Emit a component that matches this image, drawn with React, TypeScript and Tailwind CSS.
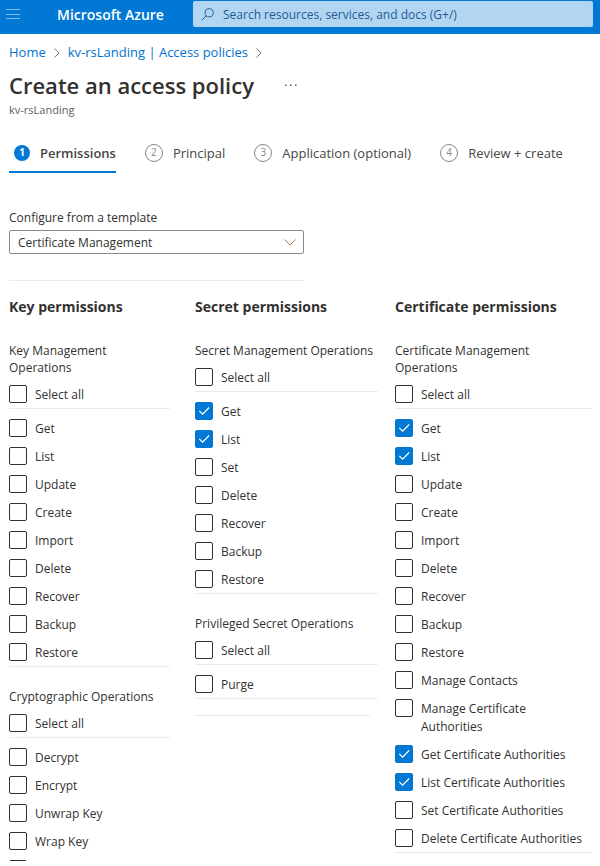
import React, { useState } from "react";

type Group = { title: string; items: string[] };
type Column = { name: string; className: string; groups: Group[]; closing?: boolean };

const columns: Column[] = [
  {
    name: "Key permissions",
    className: "pr-[25px]",
    groups: [
      {
        title: "Key Management Operations",
        items: ["Get", "List", "Update", "Create", "Import", "Delete", "Recover", "Backup", "Restore"],
      },
      {
        title: "Cryptographic Operations",
        items: ["Decrypt", "Encrypt", "Unwrap Key", "Wrap Key", "Verify"],
      },
    ],
  },
  {
    name: "Secret permissions",
    className: "pr-[17px]",
    closing: true,
    groups: [
      {
        title: "Secret Management Operations",
        items: ["Get", "List", "Set", "Delete", "Recover", "Backup", "Restore"],
      },
      { title: "Privileged Secret Operations", items: ["Purge"] },
    ],
  },
  {
    name: "Certificate permissions",
    className: "",
    groups: [
      {
        title: "Certificate Management Operations",
        items: [
          "Get",
          "List",
          "Update",
          "Create",
          "Import",
          "Delete",
          "Recover",
          "Backup",
          "Restore",
          "Manage Contacts",
          "Manage Certificate Authorities",
          "Get Certificate Authorities",
          "List Certificate Authorities",
          "Set Certificate Authorities",
          "Delete Certificate Authorities",
        ],
      },
    ],
  },
];

const certificateTemplate = [
  "Secret Management Operations/Get",
  "Secret Management Operations/List",
  "Certificate Management Operations/Get",
  "Certificate Management Operations/List",
  "Certificate Management Operations/Get Certificate Authorities",
  "Certificate Management Operations/List Certificate Authorities",
];

const steps = ["Permissions", "Principal", "Application (optional)", "Review + create"];

function Chevron() {
  return (
    <svg className="h-[10px] w-[6px] shrink-0" viewBox="0 0 6 10" fill="none" stroke="#797775" aria-hidden="true">
      <path d="M0.5 0.5 5 5 0.5 9.5" />
    </svg>
  );
}

function CheckRow({ label, checked, onChange }: { label: string; checked: boolean; onChange: () => void }) {
  return (
    <label className="flex gap-2 pr-[6px] leading-[18px]">
      <span className="grid size-[18px] shrink-0">
        <input
          type="checkbox"
          checked={checked}
          onChange={onChange}
          className="col-start-1 row-start-1 size-[18px] appearance-none rounded-xs border border-[#323130] bg-white checked:border-[#0078d4] checked:bg-[#0078d4]"
        />
        {checked && (
          <svg
            className="pointer-events-none col-start-1 row-start-1 size-[18px]"
            viewBox="0 0 18 18"
            fill="none"
            stroke="white"
            strokeWidth="1.2"
            aria-hidden="true"
          >
            <path d="M4.3 8.8 7.6 12.1 14.2 5.5" />
          </svg>
        )}
      </span>
      <span className="pt-px">{label}</span>
    </label>
  );
}

export default function App() {
  const [selected, setSelected] = useState<string[]>(certificateTemplate);

  const toggle = (key: string) =>
    setSelected((s) => (s.includes(key) ? s.filter((k) => k !== key) : [...s, key]));

  const toggleAll = (group: Group) => {
    const keys = group.items.map((i) => `${group.title}/${i}`);
    setSelected((s) =>
      keys.every((k) => s.includes(k)) ? s.filter((k) => !keys.includes(k)) : [...new Set([...s, ...keys])]
    );
  };

  return (
    <div className="flex h-screen flex-col bg-white pb-[5px] font-['Open_Sans','Noto_Sans',sans-serif] text-[12px] text-[#323130]">
      <header className="flex h-[34px] shrink-0 items-start bg-[#0078d4] pr-[7px] pl-[6px]">
        <button type="button" aria-label="Menu" className="flex h-7 w-[14px] items-center">
          <svg className="h-[11px] w-[14px]" viewBox="0 0 14 11" fill="#7fbbe9" aria-hidden="true">
            <path d="M0 0h14v1H0zM0 5h14v1H0zM0 9h14v1H0z" />
          </svg>
        </button>
        <span className="w-[173px] shrink-0 pl-[37px] text-[14px] leading-[30px] font-semibold text-white">Microsoft Azure</span>
        <div className="mt-px flex h-[26px] flex-1 items-center gap-[9px] rounded-xs bg-[#b2d6f2] pl-2">
          <svg className="size-[13px] shrink-0" viewBox="0 0 13 13" fill="none" stroke="#2a5f96" aria-hidden="true">
            <circle cx="8.2" cy="4.8" r="4.1" />
            <path d="M5.3 7.7 0.6 12.4" />
          </svg>
          <input
            type="search"
            aria-label="Search"
            placeholder="Search resources, services, and docs (G+/)"
            className="min-w-0 flex-1 bg-transparent pt-px outline-none placeholder:text-[#1f5a94]"
          />
        </div>
      </header>

      <main className="min-h-0 flex-1 overflow-hidden pr-2 pl-[9px]">
        <nav aria-label="Breadcrumb" className="mt-[10px] flex h-[18px] items-center gap-2 text-[13px] text-[#0072d0]">
          <a href="#home">Home</a>
          <Chevron />
          <a href="#policies">kv-rsLanding | Access policies</a>
          <Chevron />
        </nav>

        <div className="mt-[7px] flex h-8 items-center gap-[31px]">
          <h1 className="text-[22px] font-semibold">Create an access policy</h1>
          <button type="button" aria-label="More actions">
            <svg className="h-[2px] w-[12px]" viewBox="0 0 12 2" fill="#605e5c" aria-hidden="true">
              <path d="M0 0.5h1.5V2H0zM5 0.5h1.5V2H5zM10 0.5h1.5V2H10z" />
            </svg>
          </button>
        </div>
        <p className="mt-px text-[11px] leading-4 text-[#605e5c]">kv-rsLanding</p>

        <div role="tablist" className="mt-4 flex h-[39px] gap-[29px] text-[13px] text-[#484644]">
          {steps.map((step, i) => (
            <button
              key={step}
              type="button"
              role="tab"
              aria-selected={i === 0}
              className={
                i === 0
                  ? "flex items-center gap-[10px] border-b-2 border-[#0078d4] pl-[5px] font-semibold whitespace-nowrap"
                  : "flex items-center gap-[10px] border-b-2 border-transparent whitespace-nowrap"
              }
            >
              <span
                className={
                  i === 0
                    ? "flex size-4 items-center justify-center rounded-full bg-[#0078d4] text-[10px] font-bold text-white"
                    : "flex size-[18px] items-center justify-center rounded-full border border-[#8a8886] text-[10px] text-[#8a8886]"
                }
              >
                {i + 1}
              </span>
              <span className="pt-[2px]">{step}</span>
            </button>
          ))}
        </div>

        <div className="mt-9 w-[295px] border-b border-[#edebe9] pb-[26px]">
          <label htmlFor="template" className="block leading-[17px]">
            Configure from a template
          </label>
          <div className="mt-1 grid">
            <select
              id="template"
              className="col-start-1 row-start-1 h-6 w-full appearance-none rounded-xs border border-[#8a8886] bg-white pt-[2px] pl-2"
            >
              <option>Certificate Management</option>
            </select>
            <svg
              className="pointer-events-none col-start-1 row-start-1 mr-2 h-[7px] w-[12px] self-center justify-self-end"
              viewBox="0 0 12 7"
              fill="none"
              stroke="#b07a45"
              aria-hidden="true"
            >
              <path d="M0.5 0.5 6 6 11.5 0.5" />
            </svg>
          </div>
        </div>

        <div className="mt-4 grid grid-cols-[186fr_200fr_197fr]">
          {columns.map((column) => (
            <section key={column.name} className={column.className}>
              <h2 className="text-[14px] leading-5 font-bold whitespace-nowrap">{column.name}</h2>
              <div className="mt-[25px] flex flex-col gap-[21px]">
                {column.groups.map((group) => (
                  <fieldset key={group.title} className="min-w-0">
                    <legend className="leading-[17px]">{group.title}</legend>
                    <div className="mt-[9px] border-b border-[#edebe9] pb-1">
                      <CheckRow
                        label="Select all"
                        checked={group.items.every((i) => selected.includes(`${group.title}/${i}`))}
                        onChange={() => toggleAll(group)}
                      />
                    </div>
                    <div className="flex flex-col gap-[9px] border-b border-[#edebe9] pt-[10px] pb-1">
                      {group.items.map((item) => (
                        <CheckRow
                          key={item}
                          label={item}
                          checked={selected.includes(`${group.title}/${item}`)}
                          onChange={() => toggle(`${group.title}/${item}`)}
                        />
                      ))}
                    </div>
                  </fieldset>
                ))}
              </div>
              {column.closing && <hr className="mt-4 mr-2 border-[#edebe9]" />}
            </section>
          ))}
        </div>
      </main>
    </div>
  );
}
